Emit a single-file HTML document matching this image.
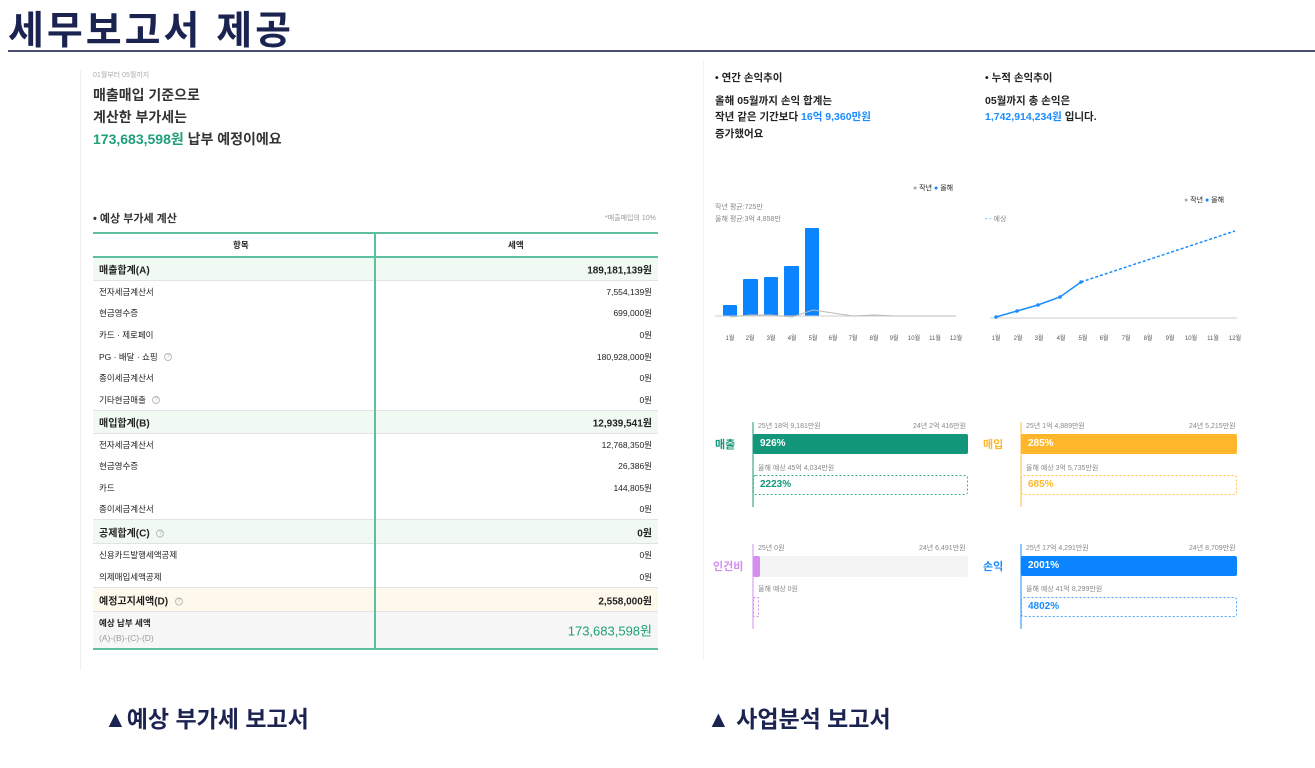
<!DOCTYPE html>
<html><head><meta charset="utf-8"><style>
*{margin:0;padding:0;box-sizing:border-box}
body{width:1315px;height:768px;background:#fff;position:relative;overflow:hidden;font-family:"Liberation Sans","Noto Sans CJK KR",sans-serif;color:#222}
.a{position:absolute;white-space:nowrap}
.b{font-weight:700}
.r{position:absolute;left:93px;width:565px;border-bottom:1px solid #e3e3e3}
.r span{position:absolute;font-size:8.5px;top:50%;transform:translateY(-50%)}
.r .l{left:6px}.r .v{right:6px}
.s{background:#f0faf2;font-weight:700}
.s span{font-size:10px}
.q{display:inline-block;width:8px;height:8px;border:1px solid #bbb;border-radius:50%;font-size:6px;color:#aaa;text-align:center;line-height:6px;margin-left:4px;vertical-align:middle;font-weight:400;font-style:normal}
.sm{font-size:7px;color:#888}
</style></head><body>
<div class="a b" style="left:8px;top:0px;font-size:39px;color:#1b2350;letter-spacing:3px">세무보고서 제공</div>
<div class="a" style="left:8px;top:50px;width:1307px;height:2px;background:#4a5075"></div>

<div class="a" style="left:80px;top:70px;width:1px;height:600px;background:#eee"></div>
<div class="a" style="left:703px;top:60px;width:1px;height:600px;background:#f2f2f2"></div>

<div class="a sm" style="left:93px;top:70px;color:#aaa">01월부터 05월까지</div>
<div class="a b" style="left:93px;top:85px;font-size:14px;color:#333">매출매입 기준으로</div>
<div class="a b" style="left:93px;top:107px;font-size:14px;color:#333">계산한 부가세는</div>
<div class="a b" style="left:93px;top:129px;font-size:14px;color:#333"><span style="color:#1d9f78">173,683,598원</span> 납부 예정이에요</div>

<div class="a b" style="left:93px;top:210px;font-size:11px;color:#333">• 예상 부가세 계산</div>
<div class="a" style="left:605px;top:213px;font-size:7px;color:#999">*매출매입의 10%</div>

<div class="a" style="left:93px;top:232px;width:565px;height:2px;background:#5cc0a0"></div>
<div class="r" style="top:234px;height:24px;border-bottom:2px solid #5cc0a0"><span style="left:140px;font-weight:700">항목</span><span style="left:415px;font-weight:700">세액</span></div>
<div class="r s" style="top:258px;height:23px"><span class="l">매출합계(A)</span><span class="v">189,181,139원</span></div>
<div class="r" style="top:281px;height:21px;border:0"><span class="l">전자세금계산서</span><span class="v">7,554,139원</span></div>
<div class="r" style="top:302px;height:22px;border:0"><span class="l">현금영수증</span><span class="v">699,000원</span></div>
<div class="r" style="top:324px;height:22px;border:0"><span class="l">카드 · 제로페이</span><span class="v">0원</span></div>
<div class="r" style="top:346px;height:21px;border:0"><span class="l">PG · 배달 · 쇼핑 <i class="q">?</i></span><span class="v">180,928,000원</span></div>
<div class="r" style="top:367px;height:22px;border:0"><span class="l">종이세금계산서</span><span class="v">0원</span></div>
<div class="r" style="top:389px;height:22px"><span class="l">기타현금매출 <i class="q">?</i></span><span class="v">0원</span></div>
<div class="r s" style="top:411px;height:23px"><span class="l">매입합계(B)</span><span class="v">12,939,541원</span></div>
<div class="r" style="top:434px;height:21px;border:0"><span class="l">전자세금계산서</span><span class="v">12,768,350원</span></div>
<div class="r" style="top:455px;height:22px;border:0"><span class="l">현금영수증</span><span class="v">26,386원</span></div>
<div class="r" style="top:477px;height:21px;border:0"><span class="l">카드</span><span class="v">144,805원</span></div>
<div class="r" style="top:498px;height:22px"><span class="l">종이세금계산서</span><span class="v">0원</span></div>
<div class="r s" style="top:520px;height:24px"><span class="l">공제합계(C) <i class="q">?</i></span><span class="v">0원</span></div>
<div class="r" style="top:544px;height:22px;border:0"><span class="l">신용카드발행세액공제</span><span class="v">0원</span></div>
<div class="r" style="top:566px;height:22px"><span class="l">의제매입세액공제</span><span class="v">0원</span></div>
<div class="r" style="top:588px;height:24px;background:#fff8ec;font-weight:700"><span class="l" style="font-size:10px">예정고지세액(D) <i class="q">?</i></span><span class="v" style="font-size:10px">2,558,000원</span></div>
<div class="r" style="top:612px;height:38px;background:#f7f7f7;border-bottom:2px solid #5cc0a0"><span class="l" style="font-weight:700;top:11px">예상 납부 세액</span><span class="l" style="top:26px;color:#999">(A)-(B)-(C)-(D)</span><span class="v" style="font-size:13px;color:#1d9f78">173,683,598원</span></div>
<div class="a" style="left:374px;top:234px;width:2px;height:416px;background:#5cc0a0"></div>

<div class="a b" style="left:104px;top:700px;font-size:23px;color:#1b2350">▲예상 부가세 보고서</div>
<div class="a b" style="left:707px;top:700px;font-size:23px;color:#1b2350">▲ 사업분석 보고서</div>

<div class="a b" style="left:715px;top:70px;font-size:10.5px">• 연간 손익추이</div>
<div class="a b" style="left:715px;top:93px;font-size:10.5px">올해 05월까지 손익 합계는</div>
<div class="a b" style="left:715px;top:109px;font-size:10.5px">작년 같은 기간보다 <span style="color:#1a8cff">16억 9,360만원</span></div>
<div class="a b" style="left:715px;top:126px;font-size:10.5px">증가했어요</div>
<div class="a b" style="left:985px;top:70px;font-size:10.5px">• 누적 손익추이</div>
<div class="a b" style="left:985px;top:93px;font-size:10.5px">05월까지 총 손익은</div>
<div class="a b" style="left:985px;top:109px;font-size:10.5px"><span style="color:#1a8cff">1,742,914,234원</span> 입니다.</div>

<div class="a" style="left:913px;top:183px;font-size:7px"><span style="color:#aaa">●</span> 작년 <span style="color:#0a84ff">●</span> 올해</div>
<div class="a sm" style="left:715px;top:202px">작년 평균:725만</div>
<div class="a sm" style="left:715px;top:214px">올해 평균:3억 4,858만</div>
<div class="a" style="left:1184px;top:195px;font-size:7px"><span style="color:#aaa">●</span> 작년 <span style="color:#0a84ff">●</span> 올해</div>
<div class="a sm" style="left:985px;top:214px"><span style="color:#1a8cff">- -</span> 예상</div>

<svg class="a" style="left:0;top:0" width="1315" height="768">
<g fill="#0a84ff">
<rect x="723" y="305" width="14" height="11" rx="1"/><rect x="743" y="279" width="15" height="37" rx="1"/><rect x="764" y="277" width="14" height="39" rx="1"/><rect x="784" y="266" width="15" height="50" rx="1"/><rect x="805" y="228" width="14" height="88" rx="1"/></g>
<line x1="715" y1="316" x2="948" y2="316" stroke="#ccc"/>
<polyline points="730,317 750,315 771,315 792,317 813,310 833,313 853,316 874,315 894,316 914,316 935,316 956,316" fill="none" stroke="#bbb"/>
<line x1="990" y1="318" x2="1237" y2="318" stroke="#ccc"/>
<polyline points="996,317 1017,311 1038,305 1060,297 1081,282" fill="none" stroke="#1a8cff" stroke-width="1.5"/>
<g fill="#1a8cff"><circle cx="996" cy="317" r="1.8"/><circle cx="1017" cy="311" r="1.8"/><circle cx="1038" cy="305" r="1.8"/><circle cx="1060" cy="297" r="1.8"/><circle cx="1081" cy="282" r="1.8"/></g>
<line x1="1081" y1="282" x2="1235" y2="231" stroke="#1a8cff" stroke-width="1.5" stroke-dasharray="3,2"/>
<g font-size="6" fill="#555" text-anchor="middle" font-family="Liberation Sans,Noto Sans CJK KR,sans-serif">
<text x="730" y="340">1월</text><text x="750" y="340">2월</text><text x="771" y="340">3월</text><text x="792" y="340">4월</text><text x="813" y="340">5월</text><text x="833" y="340">6월</text><text x="853" y="340">7월</text><text x="874" y="340">8월</text><text x="894" y="340">9월</text><text x="914" y="340">10월</text><text x="935" y="340">11월</text><text x="956" y="340">12월</text>
<text x="996" y="340">1월</text><text x="1018" y="340">2월</text><text x="1039" y="340">3월</text><text x="1061" y="340">4월</text><text x="1083" y="340">5월</text><text x="1104" y="340">6월</text><text x="1126" y="340">7월</text><text x="1148" y="340">8월</text><text x="1170" y="340">9월</text><text x="1191" y="340">10월</text><text x="1213" y="340">11월</text><text x="1235" y="340">12월</text>
</g>
<line x1="753" y1="422" x2="753" y2="507" stroke="#1a9a78"/>
<rect x="753" y="434" width="215" height="20" rx="2" fill="#12977a"/>
<rect x="753.5" y="475.5" width="214" height="19" rx="2" fill="none" stroke="#3bb08f" stroke-dasharray="2,2"/>
<line x1="1021" y1="422" x2="1021" y2="507" stroke="#ffc24a"/>
<rect x="1021" y="434" width="216" height="20" rx="2" fill="#ffb62b"/>
<rect x="1021.5" y="475.5" width="215" height="19" rx="2" fill="none" stroke="#ffc24a" stroke-dasharray="2,2"/>
<line x1="753" y1="544" x2="753" y2="629" stroke="#d38ef0"/>
<rect x="753" y="556" width="215" height="21" rx="2" fill="#f4f4f4"/>
<rect x="753" y="556" width="7" height="21" rx="2" fill="#d38ef0"/>
<rect x="753.5" y="597.5" width="5" height="19" fill="none" stroke="#d38ef0" stroke-dasharray="2,2"/>
<line x1="1021" y1="544" x2="1021" y2="629" stroke="#1a8cff"/>
<rect x="1021" y="556" width="216" height="20" rx="2" fill="#0a84ff"/>
<rect x="1021.5" y="597.5" width="215" height="19" rx="2" fill="none" stroke="#4aa5ff" stroke-dasharray="2,2"/>
</svg>
<div class="a b" style="left:715px;top:436px;font-size:11px;color:#12977a">매출</div>
<div class="a b" style="left:983px;top:436px;font-size:11px;color:#ffb62b">매입</div>
<div class="a b" style="left:713px;top:558px;font-size:11px;color:#d38ef0">인건비</div>
<div class="a b" style="left:983px;top:558px;font-size:11px;color:#1a8cff">손익</div>
<div class="a sm" style="left:758px;top:421px">25년 18억 9,181만원</div>
<div class="a sm" style="left:913px;top:421px">24년 2억 416만원</div>
<div class="a b" style="left:760px;top:438px;font-size:10px;color:#fff">926%</div>
<div class="a sm" style="left:758px;top:463px">올해 예상 45억 4,034만원</div>
<div class="a b" style="left:760px;top:479px;font-size:10px;color:#12977a">2223%</div>
<div class="a sm" style="left:1026px;top:421px">25년 1억 4,889만원</div>
<div class="a sm" style="left:1189px;top:421px">24년 5,215만원</div>
<div class="a b" style="left:1028px;top:438px;font-size:10px;color:#fff">285%</div>
<div class="a sm" style="left:1026px;top:463px">올해 예상 3억 5,735만원</div>
<div class="a b" style="left:1028px;top:479px;font-size:10px;color:#ffb62b">685%</div>
<div class="a sm" style="left:758px;top:543px">25년 0원</div>
<div class="a sm" style="left:919px;top:543px">24년 6,491만원</div>
<div class="a sm" style="left:758px;top:584px">올해 예상 0원</div>
<div class="a sm" style="left:1026px;top:543px">25년 17억 4,291만원</div>
<div class="a sm" style="left:1189px;top:543px">24년 8,709만원</div>
<div class="a b" style="left:1028px;top:560px;font-size:10px;color:#fff">2001%</div>
<div class="a sm" style="left:1026px;top:584px">올해 예상 41억 8,299만원</div>
<div class="a b" style="left:1028px;top:601px;font-size:10px;color:#1a8cff">4802%</div>
</body></html>
